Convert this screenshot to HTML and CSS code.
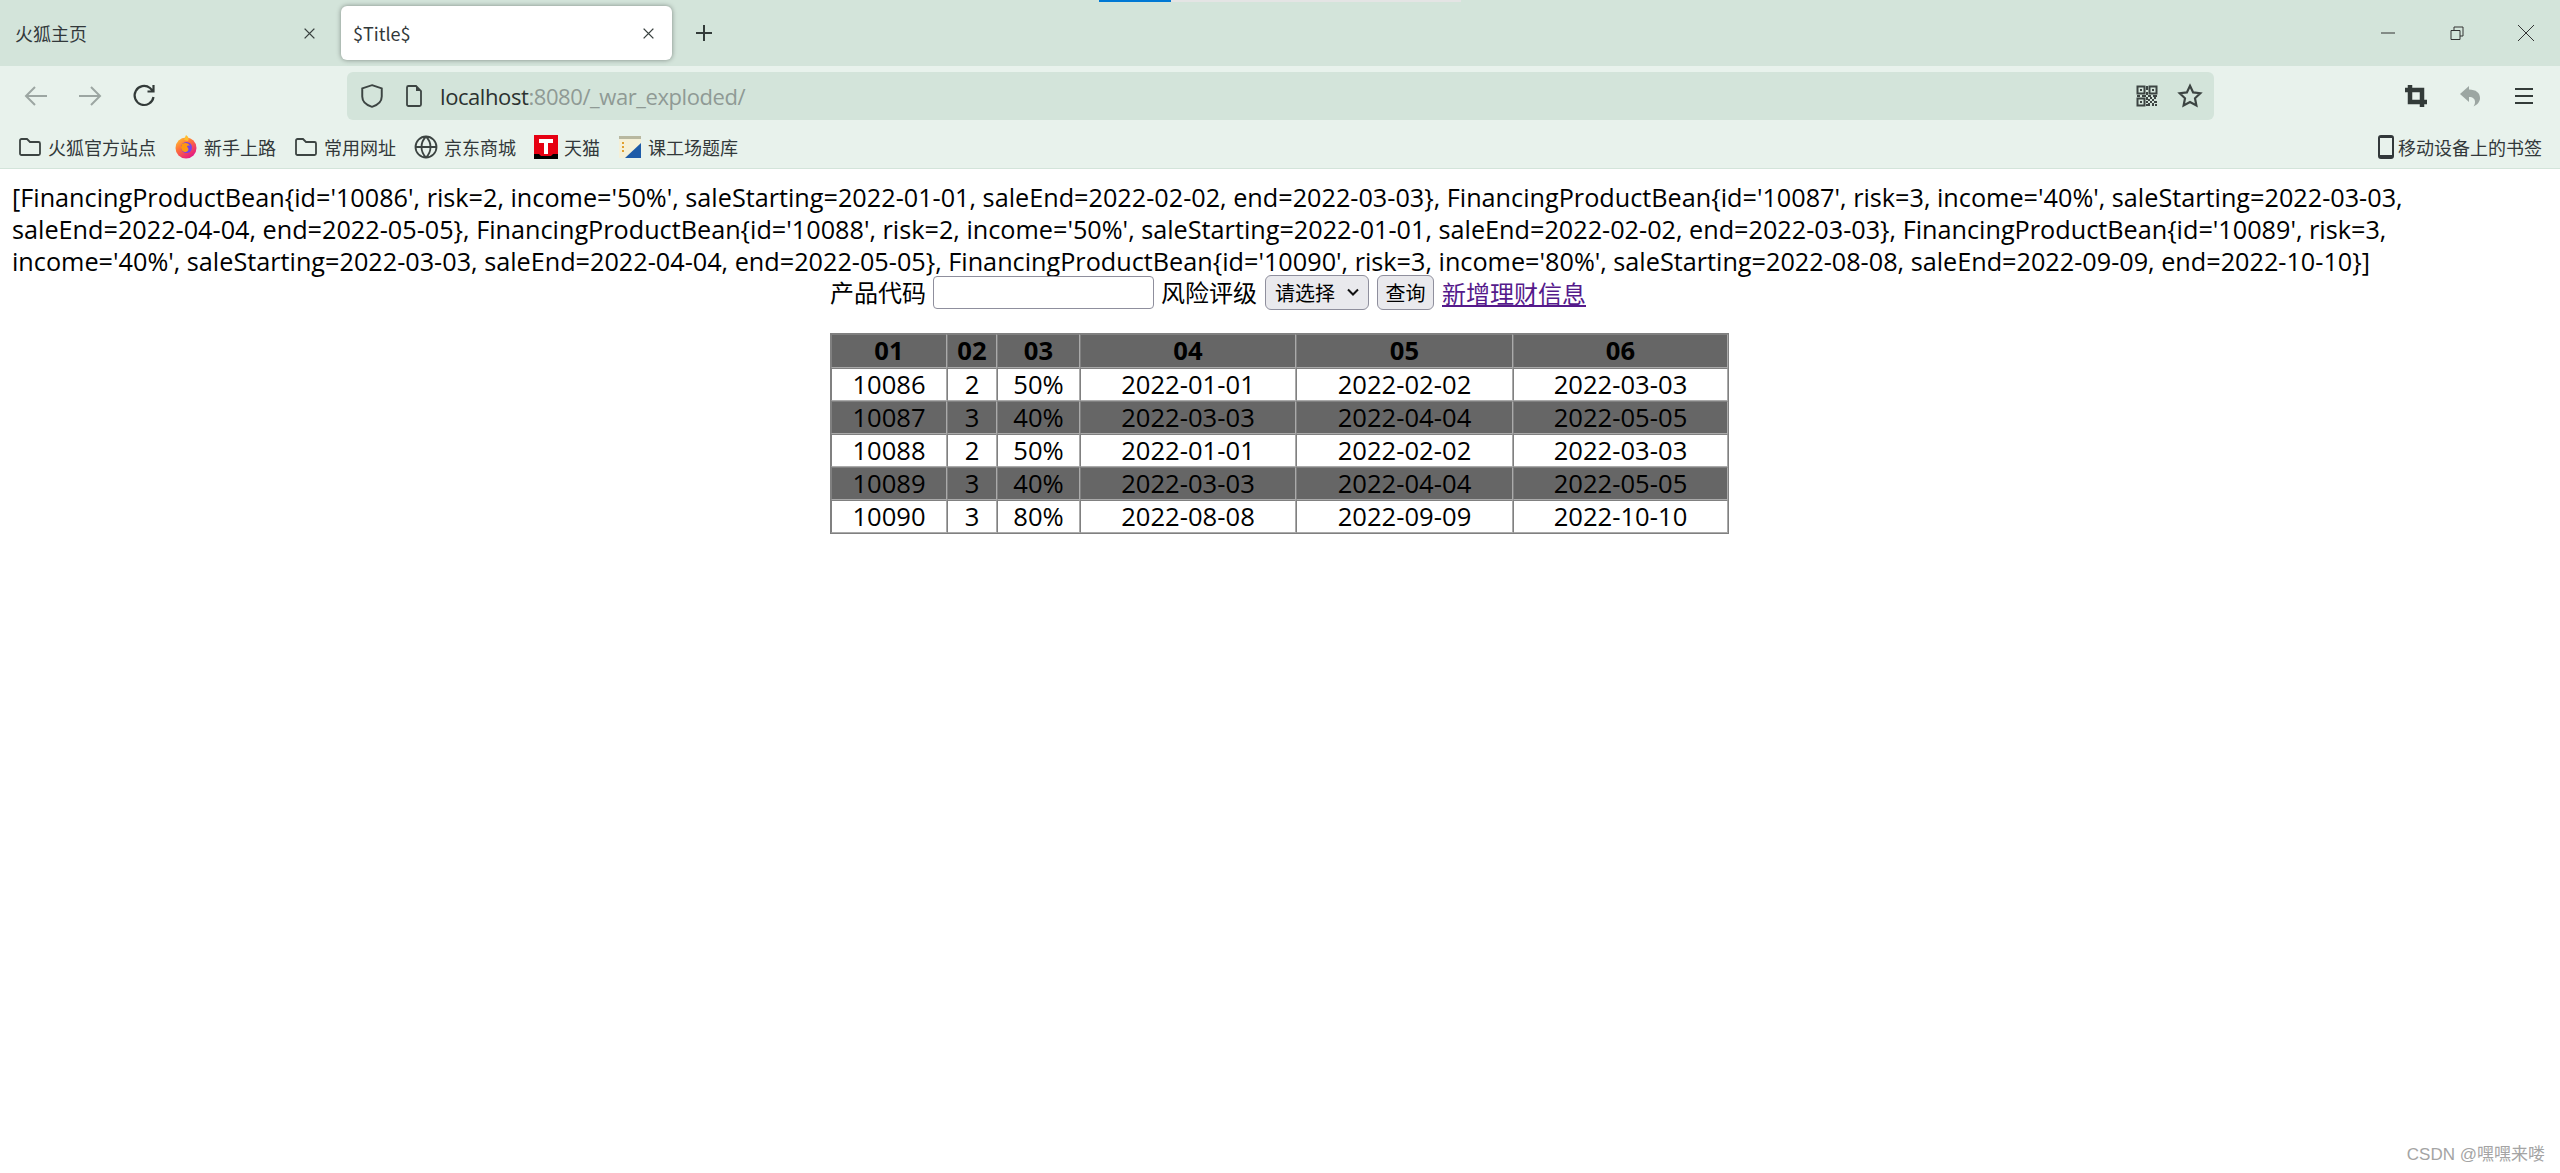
FILE: index.html
```html
<!DOCTYPE html>
<html lang="zh-CN">
<head>
<meta charset="utf-8">
<title>$Title$</title>
<link rel="stylesheet" href="styles.css">
</head>
<body>
<div class="progress"><div class="progress-fill"></div></div>

<header class="tabbar">
  <div class="tab">
    <span class="tab-title">火狐主页</span>
    <svg class="ico-close" viewBox="0 0 12 12"><path d="M1.5 1.5l9 9M10.5 1.5l-9 9"/></svg>
  </div>
  <div class="tab tab-active">
    <span class="tab-title">$Title$</span>
    <svg class="ico-close" viewBox="0 0 12 12"><path d="M1.5 1.5l9 9M10.5 1.5l-9 9"/></svg>
  </div>
  <svg class="ico-plus" viewBox="0 0 20 20"><path d="M10 2v16M2 10h16"/></svg>
  <div class="spacer"></div>
  <div class="winctl">
    <svg class="win" viewBox="0 0 16 16"><path d="M1 8h14"/></svg>
    <svg class="win" viewBox="0 0 16 16"><path d="M2 5.500h9v9H2zM5 5.500V2h9v9h-3"/></svg>
    <svg class="win" viewBox="0 0 16 16"><path d="M0 0l16 16M16 0L0 16"/></svg>
  </div>
</header>

<nav class="navbar">
  <svg class="nav-ico dim nav-back" viewBox="0 0 24 24"><path d="M23 12H2M11 3l-9 9 9 9"/></svg>
  <svg class="nav-ico dim nav-fwd" viewBox="0 0 24 24"><path d="M1 12h21M13 3l9 9-9 9"/></svg>
  <svg class="nav-ico nav-reload" viewBox="0 0 24 24"><path d="M21.500 13a9.500 9.500 0 1 1-3.500-9L21.500 7.500M21.500 1v6.500H15.500"/></svg>
  <div class="urlbar">
    <svg class="url-shield" viewBox="0 0 24 24"><path d="M12 2l9 3v7.500c0 5-4 8-9 9.500-5-1.500-9-4.500-9-9.500V5z"/></svg>
    <svg class="url-page" viewBox="0 0 24 24"><path d="M5 3.500a1.500 1.500 0 0 1 1.500-1.500H14l5 5v13.500a1.500 1.500 0 0 1-1.500 1.500h-11A1.500 1.500 0 0 1 5 20.500z"/><path class="solid" d="M14 2l5 5h-5z"/></svg>
    <span class="url"><span class="url-host">localhost</span>:8080/_war_exploded/</span>
    <div class="spacer"></div>
    <svg class="url-qr" viewBox="0 0 22 22">
      <path class="qr-s" d="M1.500 1.500h7v7h-7zM13.500 1.500h7v7h-7zM1.500 13.500h7v7h-7z"/>
      <path class="qr-f" d="M4 4h2v2H4zM16 4h2v2h-2zM4 16h2v2H4zM10 1h2v4h-2zM10 7h2v3h-2zM1 10h3v2H1zM6 10h4v2H6zM12 10h3v2h-3zM17 10h4v2h-4zM10 12h2v3h-2zM14 12h2v2h-2zM18 12h2v2h-2zM12 14h2v2h-2zM16 14h2v2h-2zM10 16h2v2h-2zM14 16h2v2h-2zM18 16h3v2h-3zM12 18h2v3h-2zM16 18h2v3h-2zM10 19h2v2h-2zM19 19h2v2h-2z"/>
    </svg>
    <svg class="url-star" viewBox="0 0 24 24"><path d="M12 2.500l2.900 6.200 6.600.8-4.900 4.600 1.300 6.700L12 17.500l-5.900 3.300 1.300-6.700-4.900-4.600 6.600-.8z"/></svg>
  </div>
  <svg class="tool tool-crop" viewBox="0 0 24 24"><path d="M6 1v17h17M1 6h17v17"/></svg>
  <svg class="tool-fill tool-undo" viewBox="0 0 24 24"><path d="M11 2L2 10l9 8v-5c4 0 6 2 6 5 0 2-1 3.500-1.500 4.500C19 21 22 18 22 14c0-5-4-8.500-11-8.500z"/></svg>
  <svg class="tool tool-menu" viewBox="0 0 24 24"><path d="M3 5h18M3 12h18M3 19h18"/></svg>
</nav>

<div class="bookmarks">
  <span class="bm">
    <svg class="bm-folder" viewBox="0 0 24 24"><path d="M2 5.500A1.500 1.500 0 0 1 3.500 4h5.500l3 3h8.500A1.500 1.500 0 0 1 22 8.500v10a1.500 1.500 0 0 1-1.500 1.500h-17A1.500 1.500 0 0 1 2 18.500z"/></svg>火狐官方站点
  </span>
  <span class="bm">
    <svg class="bm-icon" viewBox="0 0 24 24">
      <defs>
        <linearGradient id="fx" x1="0" y1="0" x2="0.7" y2="1"><stop offset="0" stop-color="#ffcf30"/><stop offset="0.45" stop-color="#ff7139"/><stop offset="1" stop-color="#e31587"/></linearGradient>
      </defs>
      <circle cx="12" cy="13" r="10.500" fill="url(#fx)"/>
      <path d="M12 0c3 2 3 4 2 6l-4-1z" fill="#ffbd2e"/>
      <circle cx="12.500" cy="12.500" r="5.500" fill="#7542e5"/>
      <path d="M8 9c3-2 7-1 8 2-2-1-3 0-3 1 2 1 2 4-1 5-3 0-5-2-5-5z" fill="#ff980e"/>
    </svg>新手上路
  </span>
  <span class="bm">
    <svg class="bm-folder" viewBox="0 0 24 24"><path d="M2 5.500A1.500 1.500 0 0 1 3.500 4h5.500l3 3h8.500A1.500 1.500 0 0 1 22 8.500v10a1.500 1.500 0 0 1-1.500 1.500h-17A1.500 1.500 0 0 1 2 18.500z"/></svg>常用网址
  </span>
  <span class="bm">
    <svg class="bm-folder" viewBox="0 0 24 24"><circle cx="12" cy="12" r="10.500"/><path d="M1.500 12h21M12 1.500c-6 6-6 15 0 21M12 1.500c6 6 6 15 0 21"/></svg>京东商城
  </span>
  <span class="bm">
    <svg class="bm-icon" viewBox="0 0 24 24"><rect width="24" height="24" fill="#e60012"/><path d="M0 19h5l2 2h10l2-2h5v5H0z" fill="#000"/><path d="M5 4h14v4h-5v11h-4V8H5z" fill="#fff"/></svg>天猫
  </span>
  <span class="bm">
    <svg class="bm-icon" viewBox="0 0 24 24"><rect x="1" y="1" width="22" height="22" fill="#f4f0d8"/><path d="M1 1h22v3H1z" fill="#b8b8a0"/><path d="M4 7h2v2H4zM4 11h2v2H4zM4 15h2v2H4z" fill="#e0a030"/><path d="M23 8v15H7z" fill="#1d5ba8"/></svg>课工场题库
  </span>
  <div class="spacer"></div>
  <span class="bm bm-mobile">
    <svg class="bm-phone" viewBox="0 0 16 24"><path fill-rule="evenodd" d="M3 0h10a3 3 0 0 1 3 3v18a3 3 0 0 1-3 3H3a3 3 0 0 1-3-3V3a3 3 0 0 1 3-3zM2 3v17h12V3z"/></svg>移动设备上的书签
  </span>
</div>

<main class="page">
  <p class="dump">[FinancingProductBean{id='10086', risk=2, income='50%', saleStarting=2022-01-01, saleEnd=2022-02-02, end=2022-03-03}, FinancingProductBean{id='10087', risk=3, income='40%', saleStarting=2022-03-03, saleEnd=2022-04-04, end=2022-05-05}, FinancingProductBean{id='10088', risk=2, income='50%', saleStarting=2022-01-01, saleEnd=2022-02-02, end=2022-03-03}, FinancingProductBean{id='10089', risk=3, income='40%', saleStarting=2022-03-03, saleEnd=2022-04-04, end=2022-05-05}, FinancingProductBean{id='10090', risk=3, income='80%', saleStarting=2022-08-08, saleEnd=2022-09-09, end=2022-10-10}]</p>
  <section class="content">
    <form class="query">
      <label class="q-label" for="code">产品代码</label>
      <input id="code" class="q-input" type="text">
      <label class="q-label" for="risk">风险评级</label>
      <select id="risk" class="q-select"><option>请选择</option></select>
      <button class="q-btn" type="button">查询</button>
      <a class="q-link" href="#">新增理财信息</a>
    </form>
    <table class="grid">
      <colgroup><col class="c1"><col class="c2"><col class="c3"><col class="c4"><col class="c5"><col class="c6"></colgroup>
      <thead>
        <tr class="dark"><th>01</th><th>02</th><th>03</th><th>04</th><th>05</th><th>06</th></tr>
      </thead>
      <tbody>
        <tr><td>10086</td><td>2</td><td>50%</td><td>2022-01-01</td><td>2022-02-02</td><td>2022-03-03</td></tr>
        <tr class="dark"><td>10087</td><td>3</td><td>40%</td><td>2022-03-03</td><td>2022-04-04</td><td>2022-05-05</td></tr>
        <tr><td>10088</td><td>2</td><td>50%</td><td>2022-01-01</td><td>2022-02-02</td><td>2022-03-03</td></tr>
        <tr class="dark"><td>10089</td><td>3</td><td>40%</td><td>2022-03-03</td><td>2022-04-04</td><td>2022-05-05</td></tr>
        <tr><td>10090</td><td>3</td><td>80%</td><td>2022-08-08</td><td>2022-09-09</td><td>2022-10-10</td></tr>
      </tbody>
    </table>
  </section>
</main>
<div class="watermark">CSDN @嘿嘿来喽</div>
</body>
</html>
```
FILE: styles.css
```css
* { box-sizing: border-box; }
html, body { margin: 0; height: 100%; overflow: hidden; background: #fff; }
body { font-family: "Open Sans", "Noto Sans CJK SC", sans-serif; color: #000; display: flex; flex-direction: column; }
svg { flex: none; display: block; }
.spacer { flex: 1; }

.progress { position: absolute; top: 0; left: 1099px; width: 362px; height: 2px; background: #e4e4e4; }
.progress-fill { width: 72px; height: 2px; background: #0078d4; }

.tabbar { height: 66px; background: #d3e4da; display: flex; align-items: flex-start; padding-top: 6px; flex: none; }
.tab { width: 331px; height: 54px; padding: 0 14px 0 15px; display: flex; align-items: center; justify-content: space-between; color: #32383a; font-size: 18px; font-family: "Noto Sans CJK SC", sans-serif; }
.tab:first-child { width: 339px; margin-right: 2px; padding-right: 23px; }
.tab-active { background: #fff; border-radius: 6px; box-shadow: 0 0 5px rgba(0,0,0,.4); padding-left: 12px; padding-right: 17px; }
.tab-title { line-height: 24px; }
.ico-close { width: 13px; height: 13px; fill: none; stroke: #3a4240; stroke-width: 1.300; }
.ico-plus { width: 20px; height: 20px; margin: 17px 0 0 22px; fill: none; stroke: #333b39; stroke-width: 2; }
.winctl { display: flex; align-items: center; gap: 53px; padding: 19px 26px 0 0; }
.win { width: 16px; height: 16px; fill: none; stroke: #333; stroke-width: 1; }

.navbar { height: 54px; background: #e8f2ec; flex: none; display: flex; align-items: center; padding: 6px 0 0; }
.nav-ico { width: 24px; height: 24px; fill: none; stroke: #333b39; stroke-width: 2; }
.nav-ico.dim { stroke: #9ca6a2; }
.nav-back { margin-left: 24px; }
.nav-fwd { margin-left: 30px; }
.nav-reload { margin-left: 30px; stroke-width: 2.200; }
.urlbar { width: 1867px; height: 48px; margin-left: 191px; background: #d3e4da; border-radius: 6px; display: flex; align-items: center; padding: 0 12px; }
.url-shield { width: 26px; height: 26px; fill: none; stroke: #3c4442; stroke-width: 1.800; }
.url-page { width: 24px; height: 26px; margin-left: 17px; fill: none; stroke: #3c4442; stroke-width: 1.800; }
.url-page .solid { fill: #3c4442; stroke: none; }
.url { margin-left: 14px; font-size: 22px; color: #8f9a95; font-family: "Open Sans", sans-serif; letter-spacing: -.42px; }
.url-host { color: #2b3230; }
.url-qr { width: 22px; height: 22px; }
.qr-s { fill: none; stroke: #3c4442; stroke-width: 2; }
.qr-f { fill: #3c4442; }
.url-star { width: 26px; height: 26px; margin-left: 19px; margin-right: -1px; fill: none; stroke: #3c4442; stroke-width: 2; }
.tool { width: 24px; height: 24px; fill: none; stroke: #333b39; stroke-width: 2; }
.tool-crop { margin-left: 190px; stroke-width: 4.500; }
.tool-fill { width: 24px; height: 24px; fill: #9ca6a2; margin-left: 30px; }
.tool-menu { margin-left: 30px; }

.bookmarks { height: 49px; background: #e8f2ec; border-bottom: 1px solid #d3e4da; flex: none; display: flex; align-items: center; padding: 5px 18px 0 18px; font-size: 18px; color: #32383a; font-family: "Noto Sans CJK SC", sans-serif; gap: 18px; }
.bm { display: flex; align-items: center; gap: 6px; line-height: 24px; }
.bm-folder { width: 24px; height: 24px; fill: none; stroke: #3c4442; stroke-width: 1.800; }
.bm-icon { width: 24px; height: 24px; }
.bm-phone { width: 16px; height: 24px; fill: #32383a; }
.bm-mobile { gap: 4px; }

.page { flex: 1; padding: 12px; }
.dump { margin: 0; font-size: 25.230px; line-height: 32px; }
.content { width: 900px; margin: 0 auto; }
.query { display: flex; align-items: center; gap: 8px; height: 36px; margin-top: -3px; font-size: 24px; font-family: "Noto Sans CJK SC", sans-serif; }
.q-label { line-height: 34px; }
.q-input { width: 221px; height: 33px; margin: 0 -1px 0 -1px; background: #fff; border: 1px solid #8f8f9d; border-radius: 4px; }
.q-select { appearance: none; width: 104px; height: 35px; font: 20px "Noto Sans CJK SC", sans-serif; color: #000; border: 1px solid #8f8f9d; border-radius: 6px; padding: 0 4px 0 9px; background: #e9e9ed url("data:image/svg+xml,%3Csvg xmlns='http://www.w3.org/2000/svg' viewBox='0 0 12 8'%3E%3Cpath d='M1 1.500l5 5 5-5' fill='none' stroke='%23111' stroke-width='2'/%3E%3C/svg%3E") no-repeat right 9px center / 12px 8px; }
.q-btn { width: 57px; height: 35px; font: 20px "Noto Sans CJK SC", sans-serif; color: #000; background: #e9e9ed; border: 1px solid #8f8f9d; border-radius: 6px; padding: 0; }
.q-link { color: #551a8b; text-decoration: underline; }

.grid { margin-top: 23px; width: 899px; table-layout: fixed; border-spacing: 0; border-collapse: separate; border: 1px solid #808080; font-size: 25.600px; line-height: 30px; text-align: center; }
.grid th, .grid td { padding: 0; height: 33px; border: 1px solid; border-color: #808080 #aaa #aaa #808080; font-family: "Open Sans", sans-serif; }
.grid th { height: 34px; font-weight: 700; }
.dark { background: #666; }
.c1 { width: 116px; }
.c2 { width: 50px; }
.c3 { width: 83px; }
.c4 { width: 216px; }
.c5 { width: 217px; }
.c6 { width: 215px; }

.watermark { position: absolute; right: 15px; bottom: 8px; font-size: 17px; color: #a4a4a4; line-height: 20px; font-family: "Liberation Sans", "Noto Sans CJK SC", sans-serif; }
```
